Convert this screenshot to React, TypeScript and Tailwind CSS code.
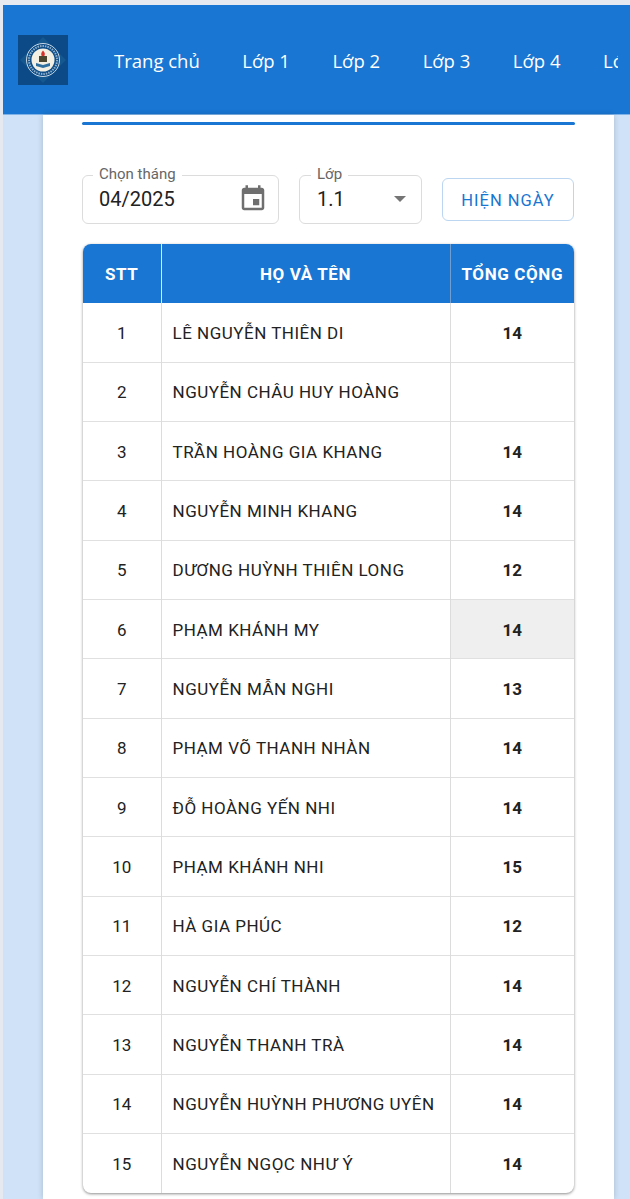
const NAV_ITEMS = ["Lớp 1", "Lớp 2", "Lớp 3", "Lớp 4", "Lớp 5"];

const STUDENTS: { name: string; total: string; active?: boolean }[] = [
  { name: "LÊ NGUYỄN THIÊN DI", total: "14" },
  { name: "NGUYỄN CHÂU HUY HOÀNG", total: "" },
  { name: "TRẦN HOÀNG GIA KHANG", total: "14" },
  { name: "NGUYỄN MINH KHANG", total: "14" },
  { name: "DƯƠNG HUỲNH THIÊN LONG", total: "12" },
  { name: "PHẠM KHÁNH MY", total: "14", active: true },
  { name: "NGUYỄN MẪN NGHI", total: "13" },
  { name: "PHẠM VÕ THANH NHÀN", total: "14" },
  { name: "ĐỖ HOÀNG YẾN NHI", total: "14" },
  { name: "PHẠM KHÁNH NHI", total: "15" },
  { name: "HÀ GIA PHÚC", total: "12" },
  { name: "NGUYỄN CHÍ THÀNH", total: "14" },
  { name: "NGUYỄN THANH TRÀ", total: "14" },
  { name: "NGUYỄN HUỲNH PHƯƠNG UYÊN", total: "14" },
  { name: "NGUYỄN NGỌC NHƯ Ý", total: "14" },
];

function SchoolLogo() {
  return (
    <svg width="50" height="50" viewBox="0 0 50 50" className="shrink-0">
      <rect width="50" height="50" fill="#0b4a86" />
      <polygon points="25,2 48,25 25,48 2,25" fill="#15578f" />
      <circle cx="25" cy="25" r="16.500" fill="#0e4d88" stroke="#c9d8e6" strokeWidth="1" />
      <circle cx="25" cy="25" r="14" fill="none" stroke="#8fb0cc" strokeWidth="2" strokeDasharray="1.500 1" />
      <circle cx="25" cy="25" r="11.500" fill="#f3efe2" />
      <path d="M25 15.500c2 2 2.200 3.800 1.300 5.500h-2.600c-.9-1.700-.6-3.500 1.300-5.500z" fill="#d5332c" />
      <rect x="21" y="21" width="8" height="6" fill="#4a4630" />
      <path d="M18 28l7 2 7-2v3l-7 2-7-2z" fill="#2f6f9f" />
    </svg>
  );
}

function EventIcon() {
  return (
    <svg width="30" height="30" viewBox="0 0 24 24" fill="#6f6f6f">
      <path d="M17 12h-5v5h5v-5zM16 1v2H8V1H6v2H5c-1.110 0-1.990.9-1.990 2L3 19c0 1.100.89 2 2 2h14c1.100 0 2-.9 2-2V5c0-1.100-.9-2-2-2h-1V1h-2zm3 18H5V8h14v11z" />
    </svg>
  );
}

export default function App() {
  return (
    <div className="h-[1199px] w-[630px] overflow-hidden bg-[#e6e9ef] pt-[5px] pl-[3px] font-['Roboto',sans-serif]">
      <div className="flex h-full flex-col bg-[#cfe2f7]">
        <header className="flex h-[110px] shrink-0 items-center border-b border-[#7fb3e8] bg-[#1976d2] pr-[12px] pl-[15px]">
          <div className="flex w-full items-center overflow-hidden">
            <SchoolLogo />
            <nav className="ml-[46px] flex items-center gap-[42.500px] pt-[3px] font-['Open_Sans',sans-serif] text-[18.500px] whitespace-nowrap text-white">
              <span>Trang chủ</span>
              {NAV_ITEMS.map((item) => (
                <span key={item}>{item}</span>
              ))}
            </nav>
          </div>
        </header>

        <main className="mr-[16px] ml-[40px] flex-1 bg-white px-[39px] pt-[7px] shadow-[0_0_6px_rgba(0,0,0,0.18)]">
          <div className="h-[3px] rounded-full bg-[#1976d2]" />

          <div className="mt-[50px] flex items-start">
            <div className="relative flex h-[49px] w-[197px] items-center justify-between rounded-[6px] border border-[#dcdcdc] pr-[10px] pb-[2px] pl-[16px]">
              <span className="absolute -top-[11px] left-[10px] bg-white px-[6px] text-[15px] leading-[18px] text-[#666666]">
                Chọn tháng
              </span>
              <span className="text-[20px] text-[#222222]">04/2025</span>
              <EventIcon />
            </div>

            <div className="relative ml-[20px] flex h-[49px] w-[123px] items-center justify-between rounded-[6px] border border-[#dcdcdc] pr-[15px] pb-[2px] pl-[17px]">
              <span className="absolute -top-[11px] left-[11px] bg-white px-[6px] text-[15px] leading-[18px] text-[#666666]">
                Lớp
              </span>
              <span className="text-[20px] text-[#222222]">1.1</span>
              <span className="h-0 w-0 border-x-[6px] border-t-[6px] border-x-transparent border-t-[#757575]" />
            </div>

            <button
              type="button"
              className="mt-[3px] ml-[20px] h-[43px] w-[132px] rounded-[6px] border border-[#bcd6f1] pt-[3px] text-[16.500px] tracking-[1px] text-[#1976d2]"
            >
              HIỆN NGÀY
            </button>
          </div>

          <div className="mx-[1px] mt-[20px] overflow-hidden rounded-[8px] shadow-[0_1px_3px_rgba(0,0,0,0.45)]">
            <table className="w-full table-fixed border-collapse text-[17px] text-[#222222]">
              <colgroup>
                <col className="w-[78px]" />
                <col className="w-[289px]" />
                <col />
              </colgroup>
              <thead>
                <tr className="h-[59px] bg-[#1976d2] text-white">
                  <th className="border-r border-[#dfe9f5] pt-[3px] font-bold tracking-[0.6px]">STT</th>
                  <th className="border-r border-[#6f9fd2] pt-[3px] font-bold tracking-[0.6px]">HỌ VÀ TÊN</th>
                  <th className="pt-[3px] font-bold tracking-[0.6px] whitespace-nowrap">TỔNG CỘNG</th>
                </tr>
              </thead>
              <tbody>
                {STUDENTS.map((s, i) => (
                  <tr key={s.name} className="h-[59.330px] border-b border-[#e0e0e0] last:border-b-0">
                    <td className="border-r border-[#dcdcdc] pt-[2px] text-center">{i + 1}</td>
                    <td className="border-r border-[#dcdcdc] pt-[2px] pl-[11px] tracking-[0.5px] whitespace-nowrap">
                      {s.name}
                    </td>
                    <td className={s.active ? "bg-[#efefef] pt-[2px] text-center font-bold" : "pt-[2px] text-center font-bold"}>
                      {s.total}
                    </td>
                  </tr>
                ))}
              </tbody>
            </table>
          </div>
        </main>
      </div>
    </div>
  );
}
